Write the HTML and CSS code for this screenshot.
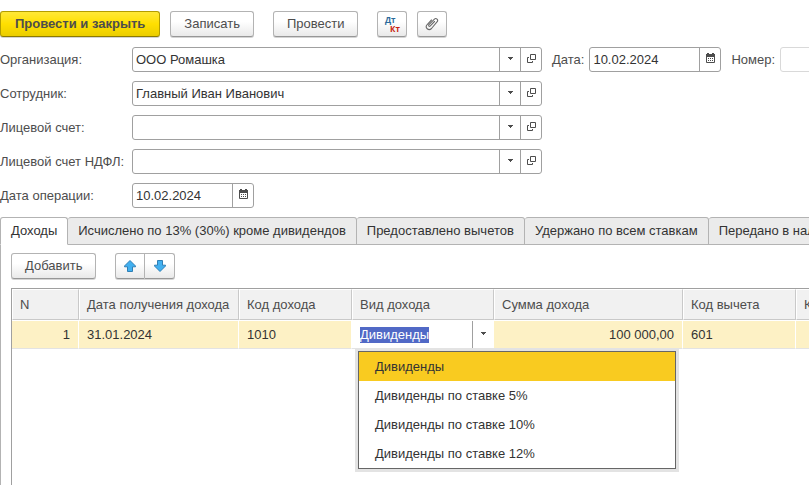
FILE: index.html
```html
<!DOCTYPE html>
<html lang="ru">
<head>
<meta charset="utf-8">
<title>Операция учета НДФЛ</title>
<link rel="stylesheet" href="styles.css">
</head>
<body>
<svg class="sprite" aria-hidden="true">
  <symbol id="open" viewBox="0 0 9 10"><path d="M3.500 1.500h5v5h-5zM2 4.500H.5v5h5V8" fill="none" stroke="#4d4d4d"/></symbol>
  <symbol id="down" viewBox="0 0 5 4"><path d="M0 1h5v1H4v1H3v1H2V3H1V2H0z" fill="#4d4d4d"/></symbol>
  <symbol id="calendar" viewBox="0 0 9 10"><path d="M.5 2v7.500h8V2" fill="none" stroke="#4d4d4d"/><path d="M0 1h1V0h2v1h3V0h2v1h1v3H0zM2 5h1v1H2zM4 5h1v1H4zM6 5h1v1H6zM2 7h1v1H2zM4 7h1v1H4zM6 7h1v1H6z" fill="#4d4d4d"/></symbol>
  <symbol id="arrow" viewBox="0 0 12 12"><path d="M6 .5l5.500 5.500v.8H8.500v4.700h-5V6.800H.5V6z" fill="#41b0f0" stroke="#2f7fb5"/></symbol>
</svg>

<div class="toolbar">
  <button class="btn btn-primary" type="button">Провести и закрыть</button>
  <button class="btn" type="button">Записать</button>
  <button class="btn spaced" type="button">Провести</button>
  <button class="btn btn-icon spaced" type="button"><span class="entry"><span class="debit">Дт</span><span class="credit">Кт</span></span></button>
  <button class="btn btn-icon" type="button" aria-label="Файлы">
    <svg width="14" height="14" viewBox="0 0 14 14"><path d="M9.500 4.500L5.300 8.900c-1 1-2.300-.1-1.300-1.200l5.200-5.400c2-1.900 4.600.6 2.800 2.600L6.500 11.500C3.600 14.300-.6 10.700 2.200 7.500L6.500 3" fill="none" stroke="#6a6a6a" stroke-width="1.100" stroke-linecap="round"/></svg>
  </button>
</div>

<form class="form">
  <div class="row">
    <label class="label" for="org">Организация:</label>
    <div class="field"><input id="org" type="text" value="ООО Ромашка"><button type="button" aria-label="Выбрать"><svg width="5" height="4"><use href="#down"/></svg></button><button type="button" aria-label="Открыть"><svg width="9" height="10"><use href="#open"/></svg></button></div>
    <label class="label-inline" for="date">Дата:</label>
    <div class="field field-date head-date"><input id="date" type="text" value="10.02.2024"><button type="button" aria-label="Календарь"><svg width="9" height="10"><use href="#calendar"/></svg></button></div>
    <label class="label-inline" for="num">Номер:</label>
    <div class="field field-number"><input id="num" type="text"></div>
  </div>
  <div class="row">
    <label class="label" for="emp">Сотрудник:</label>
    <div class="field"><input id="emp" type="text" value="Главный Иван Иванович"><button type="button" aria-label="Выбрать"><svg width="5" height="4"><use href="#down"/></svg></button><button type="button" aria-label="Открыть"><svg width="9" height="10"><use href="#open"/></svg></button></div>
  </div>
  <div class="row">
    <label class="label" for="acc">Лицевой счет:</label>
    <div class="field"><input id="acc" type="text"><button type="button" aria-label="Выбрать"><svg width="5" height="4"><use href="#down"/></svg></button><button type="button" aria-label="Открыть"><svg width="9" height="10"><use href="#open"/></svg></button></div>
  </div>
  <div class="row">
    <label class="label" for="tax">Лицевой счет НДФЛ:</label>
    <div class="field"><input id="tax" type="text"><button type="button" aria-label="Выбрать"><svg width="5" height="4"><use href="#down"/></svg></button><button type="button" aria-label="Открыть"><svg width="9" height="10"><use href="#open"/></svg></button></div>
  </div>
  <div class="row">
    <label class="label" for="opdate">Дата операции:</label>
    <div class="field field-date"><input id="opdate" type="text" value="10.02.2024"><button type="button" aria-label="Календарь"><svg width="9" height="10"><use href="#calendar"/></svg></button></div>
  </div>
</form>

<div class="tabs" role="tablist">
  <button class="tab active" type="button" role="tab" aria-selected="true">Доходы</button>
  <button class="tab" type="button" role="tab">Исчислено по 13% (30%) кроме дивидендов</button>
  <button class="tab" type="button" role="tab">Предоставлено вычетов</button>
  <button class="tab" type="button" role="tab">Удержано по всем ставкам</button>
  <button class="tab" type="button" role="tab">Передано в налоговый орган</button>
</div>

<section class="panel" role="tabpanel">
  <div class="commands">
    <button class="btn" type="button">Добавить</button>
    <div class="pair">
      <button class="btn btn-icon" type="button" aria-label="Вверх"><svg width="12" height="12"><use href="#arrow"/></svg></button>
      <button class="btn btn-icon" type="button" aria-label="Вниз"><svg class="flip" width="12" height="12"><use href="#arrow"/></svg></button>
    </div>
  </div>
  <table class="grid">
    <thead>
      <tr><th class="c-n">N</th><th class="c-date">Дата получения дохода</th><th class="c-code">Код дохода</th><th class="c-kind">Вид дохода</th><th class="c-sum">Сумма дохода</th><th class="c-code">Код вычета</th><th class="c-last">Код</th></tr>
    </thead>
    <tbody>
      <tr>
        <td class="num">1</td><td>31.01.2024</td><td>1010</td>
        <td class="edit">
          <div class="editor"><input id="kind" type="text" value="Дивиденды" aria-label="Вид дохода"><button type="button" aria-label="Выбрать"><svg width="5" height="4"><use href="#down"/></svg></button></div>
          <ul class="menu" role="listbox">
            <li class="current" role="option" aria-selected="true">Дивиденды</li>
            <li role="option">Дивиденды по ставке 5%</li>
            <li role="option">Дивиденды по ставке 10%</li>
            <li role="option">Дивиденды по ставке 12%</li>
          </ul>
        </td>
        <td class="num">100 000,00</td><td>601</td><td></td>
      </tr>
    </tbody>
  </table>
</section>
<script src="main.js"></script>
</body>
</html>
```
FILE: styles.css
```css
* { box-sizing: border-box; }

body {
  margin: 0;
  min-height: 100vh;
  display: flex;
  flex-direction: column;
  overflow: hidden;
  background: #fff;
  color: #4d4d4d;
  font: 13px/16px "Liberation Sans", Arial, sans-serif;
  white-space: nowrap;
}

button, input { font: inherit; color: inherit; margin: 0; }
svg { display: block; flex: none; }
.sprite { position: absolute; width: 0; height: 0; }

.toolbar { display: flex; gap: 10px; padding: 11px 0 10px; }

.btn {
  height: 26px;
  padding: 0 13px;
  border: 1px solid #b3b3b3;
  border-bottom-color: #979797;
  border-radius: 3px;
  background: linear-gradient(#fff 40%, #e9e9e9);
  box-shadow: 0 1px 0 #d4d4d4;
}
.btn-primary {
  padding: 0 14px;
  border-color: #b39d00;
  border-bottom-color: #8c7a00;
  background: linear-gradient(#ffe838, #ffdf00 50%, #ebcd00);
  font-weight: bold;
}
.btn-icon {
  width: 30px;
  padding: 0;
  display: flex;
  align-items: center;
  justify-content: center;
}
.toolbar .spaced { margin-left: 9px; }

.entry { display: grid; width: 15px; font: bold 8px/9px "Open Sans", sans-serif; }
.debit { text-align: left; color: #2b6a9b; }
.credit { text-align: right; color: #c8200c; }

.form { display: flex; flex-direction: column; gap: 9px; }
.row { display: flex; align-items: center; }
.label { flex: none; width: 132px; }
.label-inline { margin: 0 5px 0 10px; }

.field {
  display: flex;
  flex: none;
  width: 410px;
  height: 25px;
  border: 1px solid #a0a0a0;
  border-radius: 3px;
  background: #fff;
  color: #333;
}
.field input, .editor input {
  flex: 1;
  width: 0;
  min-width: 0;
  padding: 0 3px;
  border: 0;
  outline: 0;
  background: none;
}
.field button, .editor button {
  display: flex;
  align-items: center;
  justify-content: center;
  flex: none;
  width: 21px;
  padding: 0 0 3px 1px;
  border: 0;
  border-left: 1px solid #a0a0a0;
  background: none;
}
.field-date { width: 122px; }
.head-date { width: 132px; }
.field-number { width: 120px; border-color: #d9d9d9; }

.tabs { display: flex; margin-top: 9px; }
.tab {
  flex: none;
  height: 28px;
  padding: 0 10px;
  border: 1px solid #b3b3b3;
  border-left-width: 0;
  border-radius: 3px 3px 0 0;
  background: #ebebeb;
  color: #333;
}
.tab.active { border-left-width: 1px; border-bottom-color: #fff; background: #fff; }

.panel {
  flex: 1;
  display: flex;
  flex-direction: column;
  padding: 8px 0 0 10px;
  border-left: 1px solid #b3b3b3;
}
/* Continues the frame of the table down to the window edge. */
.panel::after {
  content: "";
  flex: 1;
  border-left: 1px solid #a0a0a0;
}
.commands { display: flex; gap: 19px; margin-bottom: 9px; }
.pair { display: flex; }
.pair .btn:first-child { border-radius: 3px 0 0 3px; }
.pair .btn + .btn { border-left-width: 0; border-radius: 0 3px 3px 0; }
.flip { transform: scaleY(-1); }

.grid {
  min-width: 100%;
  width: max-content;
  border: 1px solid #a0a0a0;
  border-width: 1px 0 0 1px;
  border-collapse: separate;
  border-spacing: 0;
}
.grid th {
  height: 31px;
  padding: 0 7px;
  border: 1px solid #fff;
  border-right-color: #c9c9c9;
  border-bottom-color: #c9c9c9;
  background: #f1f1f1 padding-box;
  font-weight: normal;
  text-align: left;
}
.grid td {
  height: 29px;
  padding: 0 8px;
  border: 1px solid #fff;
  border-left-width: 0;
  border-bottom-color: #e3e3e3;
  background: #fdf1c5 padding-box;
  color: #333;
}
.grid .num { text-align: right; }
.c-n { width: 67px; }
.c-date { width: 160px; }
.c-code { width: 113px; }
.c-kind { width: 142px; }
.c-sum { width: 189px; }
.c-last { width: 140px; }

.grid td.edit { position: relative; padding: 0; background: #fff; }
.editor { display: flex; height: 27px; }
.editor input { padding-left: 8px; }
.editor ::selection { background: #5169c6; color: #fff; }

.menu {
  position: absolute;
  top: 30px;
  left: 6px;
  width: 318px;
  margin: 0;
  padding: 0;
  border: 1px solid #666;
  background: #fff;
  box-shadow: 0 0 0 3px #e3e3e3;
  list-style: none;
}
.menu li { padding: 7px 16px 6px; }
.menu .current { background: #f9cb20; }
```
FILE: main.js
```js
const kind = document.getElementById('kind');
kind.focus();
kind.select();
```
